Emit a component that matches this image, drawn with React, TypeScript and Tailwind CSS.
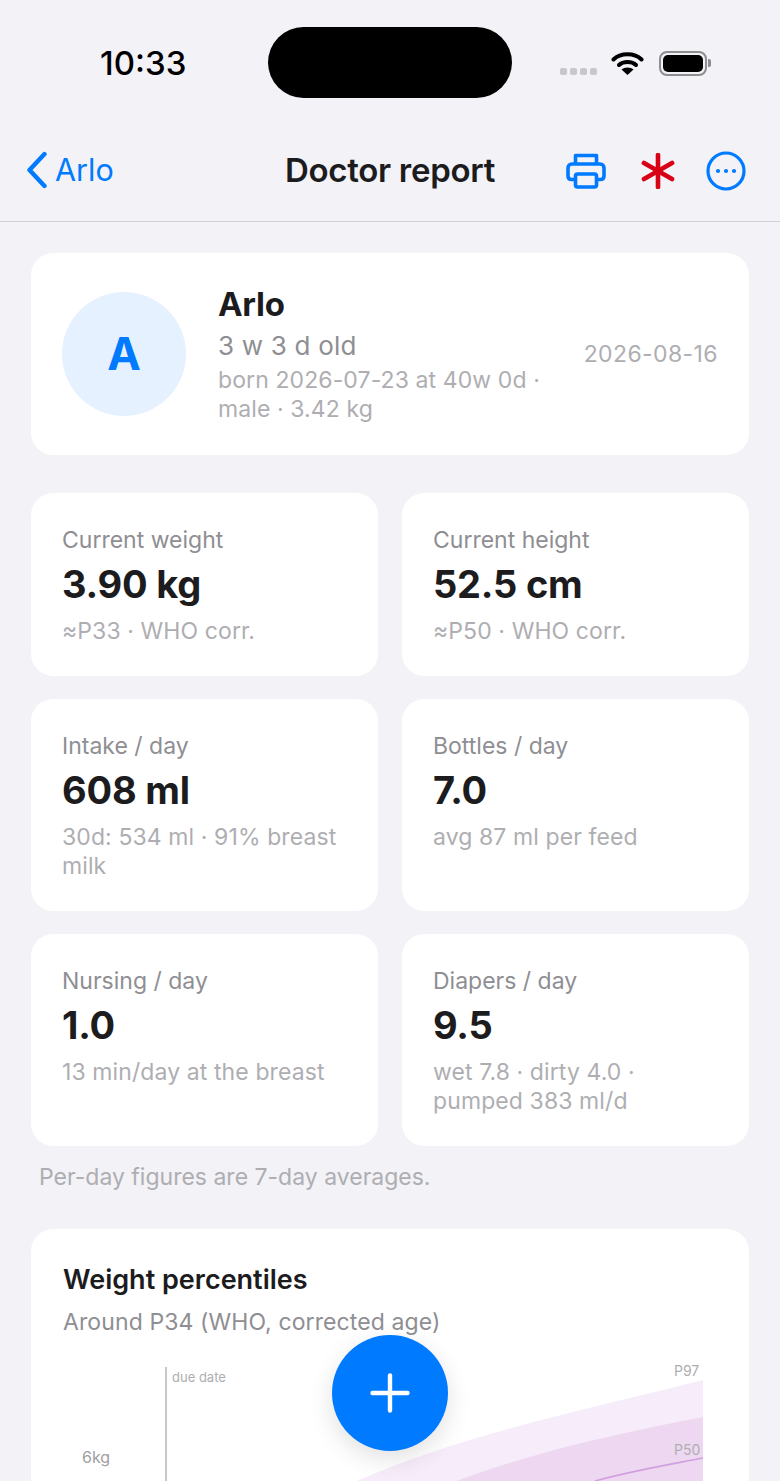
function Stat({ label, value, sub, h }: { label: string; value: string; sub: string[]; h: string }) {
  return (
    <div className={`bg-white rounded-[22px] px-[31px] pt-[31px] ${h}`}>
      <div className="text-[23px] leading-[32px] text-[#8e8e93]">{label}</div>
      <div className="text-[38px] leading-[46px] font-bold text-[#1c1c1e] mt-[5px] tracking-[-0.2px]">{value}</div>
      <div className="text-[23px] leading-[29px] text-[#aeaeb2] mt-[10px] tracking-[0.1px]">
        {sub.map((s) => (<div key={s}>{s}</div>))}
      </div>
    </div>
  );
}

export default function App() {
  return (
    <div className="relative w-[780px] h-[1481px] overflow-hidden bg-[#f2f2f7] font-['Inter',sans-serif]">
      {/* status bar */}
      <div className="relative h-[125px]">
        <div className="absolute left-[100px] top-[42px] text-[33px] leading-[42px] font-medium text-black">10:33</div>
        <div className="absolute left-[268px] top-[27px] w-[244px] h-[71px] rounded-full bg-black" />
        <div className="absolute left-[560px] top-[68px] flex gap-[3px]">
          <span className="w-[7px] h-[7px] rounded-[2px] bg-[#c7c7cc]" />
          <span className="w-[7px] h-[7px] rounded-[2px] bg-[#c7c7cc]" />
          <span className="w-[7px] h-[7px] rounded-[2px] bg-[#c7c7cc]" />
          <span className="w-[7px] h-[7px] rounded-[2px] bg-[#c7c7cc]" />
        </div>
        <svg className="absolute left-[611px] top-[50px]" width="33" height="26" viewBox="0 0 33 26" fill="none">
          <path d="M2.5 9.5C9.5 2.5 23.5 2.5 30.5 9.5" stroke="#000" strokeWidth="4" strokeLinecap="round" />
          <path d="M8 15C12 11 21 11 25 15" stroke="#000" strokeWidth="4" strokeLinecap="round" />
          <path d="M16.5 25L10.5 19.5C13.5 16.7 19.5 16.7 22.5 19.5Z" fill="#000" />
        </svg>
        <div className="absolute left-[659px] top-[51px] w-[48px] h-[25px] rounded-[8px] border-2 border-[#8e8e8e] p-[2px]">
          <div className="w-full h-full rounded-[5px] bg-black" />
        </div>
        <div className="absolute left-[708px] top-[59px] w-[3px] h-[8px] rounded-r-[2px] bg-[#8e8e8e]" />
      </div>

      {/* nav */}
      <div className="relative h-[97px] border-b border-[#d1d1d6]">
        <div className="absolute left-[26px] top-[25px] flex items-center">
          <svg width="22" height="38" viewBox="0 0 22 38" fill="none">
            <path d="M18.5 3L3.5 19L18.5 35" stroke="#007aff" strokeWidth="4.4" strokeLinecap="round" strokeLinejoin="round" />
          </svg>
          <span className="ml-[7px] text-[30.5px] leading-[40px] text-[#007aff]">Arlo</span>
        </div>
        <div className="absolute left-0 right-0 top-[25px] text-center text-[33px] leading-[40px] font-semibold text-[#1c1c1e] tracking-[-0.3px]">Doctor report</div>
        <svg className="absolute left-[566px] top-[28px]" width="40" height="36" viewBox="0 0 40 36" fill="none" stroke="#007aff" strokeWidth="3.6" strokeLinejoin="round">
          <path d="M9.5 11V2.5H30.5V11" />
          <path d="M9.5 26.5H5.5C3.3 26.5 2 25 2 23V15C2 12.5 3.8 11 6 11H34C36.2 11 38 12.5 38 15V23C38 25 36.7 26.5 34.5 26.5H30.5" />
          <rect x="9.5" y="21" width="21" height="13" rx="2" />
        </svg>
        <svg className="absolute left-[641px] top-[28px]" width="34" height="36" viewBox="0 0 34 36" fill="none" stroke="#d70015" strokeWidth="4.6" strokeLinecap="round">
          <path d="M17 2V34" />
          <path d="M3 10L31 26" />
          <path d="M31 10L3 26" />
        </svg>
        <svg className="absolute left-[706px] top-[26px]" width="40" height="40" viewBox="0 0 40 40" fill="none">
          <circle cx="20" cy="20" r="18" stroke="#007aff" strokeWidth="3.2" />
          <circle cx="12" cy="20" r="2.1" fill="#007aff" />
          <circle cx="20" cy="20" r="2.1" fill="#007aff" />
          <circle cx="28" cy="20" r="2.1" fill="#007aff" />
        </svg>
      </div>

      {/* content */}
      <div className="px-[31px] pt-[31px]">
        <div className="bg-white rounded-[22px] h-[202px] pl-[31px] pr-[31px] flex items-center">
          <div className="w-[124px] h-[124px] rounded-full bg-[#e5f1ff] flex items-center justify-center text-[45px] font-bold text-[#007aff] shrink-0">A</div>
          <div className="ml-[32px] w-[340px] shrink-0">
            <div className="text-[33px] leading-[40px] font-bold text-[#1c1c1e] tracking-[-0.3px]">Arlo</div>
            <div className="text-[26px] leading-[34px] text-[#8e8e93] mt-[5px] tracking-[0.2px]">3 w 3 d old</div>
            <div className="text-[23px] leading-[29px] text-[#aeaeb2] mt-[3px] tracking-[0.1px]">born 2026-07-23 at 40w 0d ·<br />male · 3.42 kg</div>
          </div>
          <div className="ml-auto text-[23px] text-[#aeaeb2] tracking-[0.4px]">2026-08-16</div>
        </div>

        <div className="grid grid-cols-2 gap-x-[24px] gap-y-[23px] mt-[38px]">
          <Stat h="h-[183px]" label="Current weight" value="3.90 kg" sub={["≈P33 · WHO corr."]} />
          <Stat h="h-[183px]" label="Current height" value="52.5 cm" sub={["≈P50 · WHO corr."]} />
          <Stat h="h-[212px]" label="Intake / day" value="608 ml" sub={["30d: 534 ml · 91% breast", "milk"]} />
          <Stat h="h-[212px]" label="Bottles / day" value="7.0" sub={["avg 87 ml per feed"]} />
          <Stat h="h-[212px]" label="Nursing / day" value="1.0" sub={["13 min/day at the breast"]} />
          <Stat h="h-[212px]" label="Diapers / day" value="9.5" sub={["wet 7.8 · dirty 4.0 ·", "pumped 383 ml/d"]} />
        </div>

        <div className="text-[23px] leading-[30px] text-[#aeaeb2] mt-[16px] ml-[8px]">Per-day figures are 7-day averages.</div>

        <div className="bg-white rounded-[22px] mt-[37px] h-[400px] px-[32px] pt-[33px]">
          <div className="text-[27px] leading-[36px] font-semibold text-[#1c1c1e]">Weight percentiles</div>
          <div className="text-[23px] leading-[32px] text-[#8e8e93] mt-[8px] tracking-[0.1px]">Around P34 (WHO, corrected age)</div>
          <svg className="mt-[29px] -ml-[32px]" width="718" height="114" viewBox="0 0 718 114" fill="none">
            <path d="M135 0V114" stroke="#c7c7cc" strokeWidth="2" />
            <path d="M672 13C550 44 430 68 326 114H672Z" fill="#f7ecf9" />
            <path d="M672 50C590 66 505 84 426 114H672Z" fill="#eed8f1" />
            <path d="M672 91C636 98 600 104 564 114" stroke="#d29fe0" strokeWidth="1.6" />
          </svg>
        </div>
      </div>

      {/* chart labels */}
      <div className="absolute left-[172px] top-[1369px] text-[13px] leading-[17px] text-[#aeaeb2]">due date</div>
      <div className="absolute left-[674px] top-[1362px] text-[14px] leading-[17px] text-[#aeaeb2]">P97</div>
      <div className="absolute left-[674px] top-[1441px] text-[14px] leading-[17px] text-[#aeaeb2]">P50</div>
      <div className="absolute left-[82px] top-[1448px] text-[16px] leading-[19px] text-[#a0a0a5]">6kg</div>

      {/* FAB */}
      <div className="absolute left-[332px] top-[1335px] w-[116px] h-[116px] rounded-full bg-[#007aff] flex items-center justify-center shadow-[0_8px_24px_rgba(0,0,0,0.12)]">
        <svg width="40" height="40" viewBox="0 0 40 40" fill="none" stroke="#fff" strokeWidth="4.4" strokeLinecap="round">
          <path d="M20 2.5V37.5" />
          <path d="M2.5 20H37.5" />
        </svg>
      </div>
    </div>
  );
}
